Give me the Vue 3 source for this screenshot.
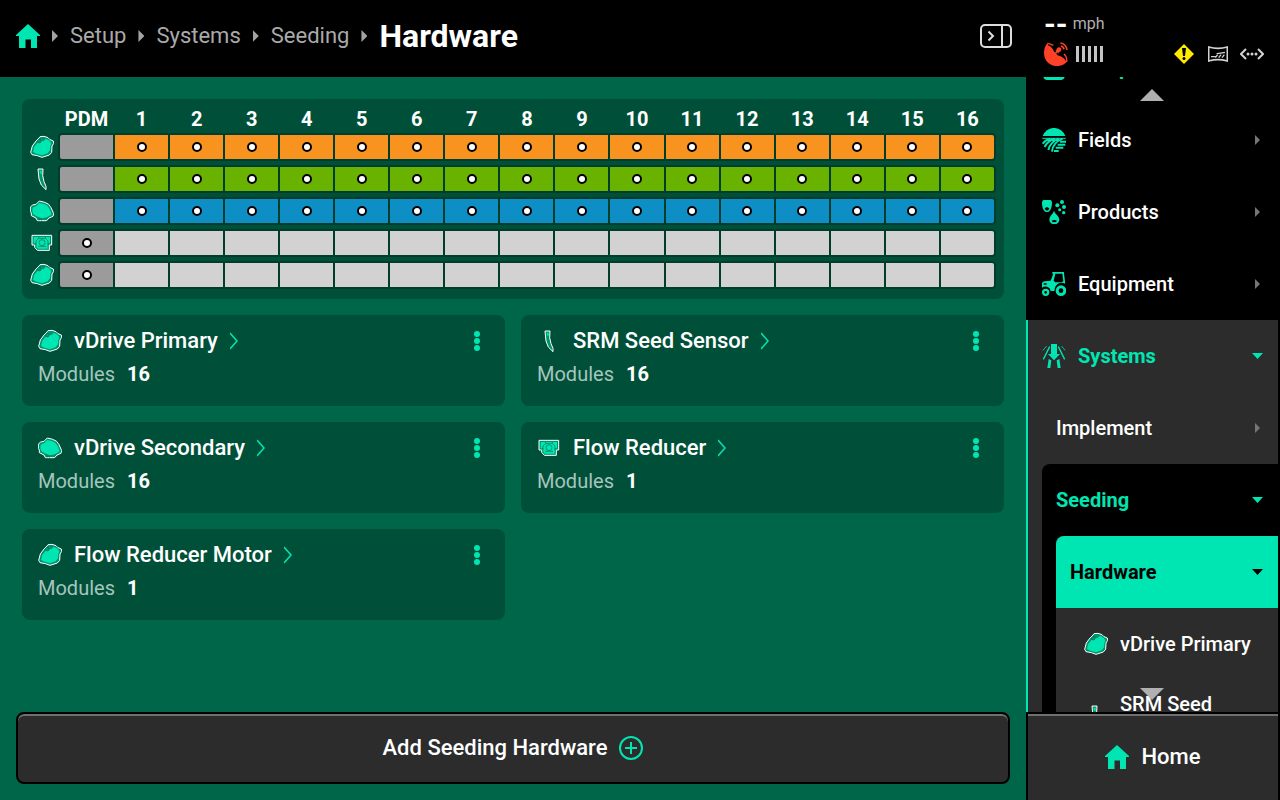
<script setup>
import { ref, onMounted } from 'vue'

const crumbs = ['Setup', 'Systems', 'Seeding']
const columns = Array.from({ length: 16 }, (_, i) => i + 1)

const rows = [
  { name: 'vDrive Primary', icon: 'motor', tone: 'orange', pdm: false, filled: true },
  { name: 'SRM Seed Sensor', icon: 'sensor', tone: 'green', pdm: false, filled: true },
  { name: 'vDrive Secondary', icon: 'motor-alt', tone: 'blue', pdm: false, filled: true },
  { name: 'Flow Reducer', icon: 'reducer', tone: 'empty', pdm: true, filled: false },
  { name: 'Flow Reducer Motor', icon: 'motor', tone: 'empty', pdm: true, filled: false }
]

const cards = [
  { name: 'vDrive Primary', icon: 'motor', modules: 16 },
  { name: 'SRM Seed Sensor', icon: 'sensor', modules: 16 },
  { name: 'vDrive Secondary', icon: 'motor-alt', modules: 16 },
  { name: 'Flow Reducer', icon: 'reducer', modules: 1 },
  { name: 'Flow Reducer Motor', icon: 'motor', modules: 1 }
]

const links = [
  { name: 'Fields', icon: 'fields' },
  { name: 'Products', icon: 'products' },
  { name: 'Equipment', icon: 'tractor' }
]

const nav = ref(null)
onMounted(() => {
  nav.value.scrollTop = 45
})
</script>

<template>
  <svg class="sprite" aria-hidden="true">
    <symbol id="home" viewBox="0 0 24 24">
      <path d="M12 0 24 11v1h-3v12h-6v-8.500H9.500V24H3V12H0v-1z" />
    </symbol>
    <symbol id="motor" viewBox="0 0 72 72">
      <path class="shell" d="M30 5 42 4 54 8 60 14 70 18 71 25 66 33 65 52 58 60 36 67 22 62 6 59 2 52 7 33 18 18 27 9z" />
      <path class="core" d="M32 18 40 19 48 11 57 16 64 24 61 34 60 46 53 55 36 61 18 56 9 50 13 35 22 25z" />
      <path class="line" d="M22 20 30 24 34 17 28 13" />
    </symbol>
    <symbol id="motor-alt" viewBox="0 0 72 72">
      <path class="shell" d="M28 6 44 10 56 16 63 26 71 44 69 52 57 57 50 65 22 65 18 57 4 50 4 42 1 37 1 24 8 18 18 16z" />
      <path class="core" d="M28 12 42 15 52 20 59 30 65 45 62 49 50 55 36 58 20 52 10 46 7 36 8 26 20 20z" />
      <path class="line" d="M27 64V58M34 64V59" />
    </symbol>
    <symbol id="sensor" viewBox="0 0 72 72">
      <path class="shell" d="M24 6H39L38 26 42 44 48 58V68L34 54 27 36z" />
      <path class="core" d="M29 11H35V20H30z" />
    </symbol>
    <symbol id="reducer" viewBox="0 0 72 72">
      <path class="shell" d="M6 13H65V42H58V58H22L14 49V42H6z" />
      <path class="core" d="M11 18H60V37H53V53H24L19 48V37H11z" />
      <path class="line thin" d="M18 40V30L26 22H46L54 30V42M24 46H48M26 22V15M46 22V15" />
      <circle class="line thin" cx="36" cy="35" r="9" />
    </symbol>
    <symbol id="fields" viewBox="0 0 72 72">
      <path d="M2 24A36 36 0 0 1 70 24z" />
      <g fill="none" stroke="currentColor" stroke-width="6">
        <path d="M1 31H71" stroke-width="3" />
        <path d="M25 32C14 34 8 39 2 47M38 32C24 36 13 46 8 57M50 32C34 38 21 52 19 66M62 32C42 40 31 54 30 71" />
        <path d="M54 41H72M47 50H70M41 59H64M36 69H50" />
      </g>
    </symbol>
    <symbol id="products" viewBox="0 0 72 72">
      <path fill-rule="evenodd" d="M5 0H25Q30 1 30 8C30 24 24 36 15 36S0 24 0 8Q0 1 5 0zM8 25Q10 32 15 32T22 25L15 21z" />
      <path fill-rule="evenodd" d="M36 32C38 41 52 48 52 59A15 14 0 0 1 22 59C22 48 34 41 36 32zM29 62Q31 67 37 67T45 62Q37 58 29 62z" />
      <circle cx="60" cy="6" r="6" /><circle cx="46" cy="16" r="6" /><circle cx="66" cy="21" r="6" />
      <circle cx="53" cy="29" r="4.500" /><circle cx="65" cy="38" r="5" />
    </symbol>
    <symbol id="tractor" viewBox="0 0 72 72">
      <path fill-rule="evenodd" d="M31 0H66V5L69 28V35A21 21 0 0 0 38 54L37 57H26A16 16 0 0 0 0 47V33Q2 29 8 28L26 26 34 5H31zM40 5 35 26 40 31H58L64 28 61 5zM5 38H14V34H5z" />
      <path fill-rule="evenodd" d="M57 40A16 16 0 1 0 57 72 16 16 0 1 0 57 40zM57 49A7 7 0 1 1 57 63 7 7 0 1 1 57 49z" />
      <path fill-rule="evenodd" d="M11 50A11 11 0 1 0 11 72 11 11 0 1 0 11 50zM11 57A4 4 0 1 1 11 65 4 4 0 1 1 11 57z" />
    </symbol>
    <symbol id="systems" viewBox="0 0 72 72">
      <path d="M27 0H45V30H54L36 49 18 30H27z" />
      <path d="M20 45 28 49 25 72H16zM52 45 44 49 47 72H56z" />
      <path d="M23 8 4 46M49 8 68 46" fill="none" stroke="currentColor" stroke-width="4" />
      <path d="M13 7 2 20M59 7 70 20" fill="none" stroke="currentColor" stroke-width="3" stroke-dasharray="6 2" />
    </symbol>
    <symbol id="setup" viewBox="0 0 24 24">
      <path d="M4 0H20Q23 0 23 4V20Q22 24 19 24H5Q2 24 1 20V4Q1 0 4 0z" />
    </symbol>
    <symbol id="dish" viewBox="0 0 72 72">
      <path d="M10 4C-4 20-3 48 12 62 28 76 54 76 68 60L70 56 42 34 46 30A7 7 0 1 0 38 22L34 27z" />
      <g fill="none" stroke="currentColor" stroke-width="5">
        <path d="M51 12A12 12 0 0 1 60 22M49 3A22 22 0 0 1 69 24" />
      </g>
      <path d="M12 7Q26 10 32 27L43 38Q60 42 69 57" fill="none" stroke="#000" stroke-width="5" />
      <path d="M10 4Q20 5 28 10M60 36Q70 44 68 60" fill="none" stroke="currentColor" stroke-width="4" />
      <path d="M30 38 45 24" stroke="currentColor" stroke-width="5" />
    </symbol>
    <symbol id="implement-map" viewBox="0 0 60 48">
      <g fill="none" stroke="currentColor" stroke-width="4">
        <path d="M2 3Q30 11 58 3V45Q30 37 2 45z" stroke-width="5" />
        <path d="M26 23Q38 22 51 19" />
        <path d="M9 32H22M22 35 29 26M32 35 39 26M42 35 49 26" />
      </g>
    </symbol>
  </svg>

  <div class="app">
    <main class="main">
      <header class="header">
        <nav class="crumbs" aria-label="Breadcrumb">
          <a href="#" class="crumb-home" aria-label="Home"><svg class="icon"><use href="#home" /></svg></a>
          <template v-for="crumb in crumbs" :key="crumb">
            <i class="caret right light"></i>
            <a href="#" class="crumb">{{ crumb }}</a>
          </template>
          <i class="caret right light"></i>
          <h1>Hardware</h1>
        </nav>
        <button class="plain" type="button" aria-label="Collapse side panel">
          <svg class="panel-icon" viewBox="0 0 32 24" fill="none" stroke="currentColor" stroke-width="2">
            <rect x="1" y="1" width="30" height="22" rx="4" />
            <path d="M22 1V23" />
            <path d="M8.500 7.500 13 12 8.500 16.500" stroke-width="2" />
          </svg>
        </button>
      </header>

      <div class="content">
        <section class="matrix">
          <table>
            <colgroup><col class="icon-col" /><col span="17" /></colgroup>
            <thead>
              <tr>
                <td></td>
                <th scope="col">PDM</th>
                <th v-for="n in columns" :key="n" scope="col">{{ n }}</th>
              </tr>
            </thead>
            <tbody>
              <tr v-for="row in rows" :key="row.name" :class="row.tone">
                <th scope="row" :aria-label="row.name">
                  <svg class="icon"><use :href="'#' + row.icon" /></svg>
                </th>
                <td class="cell pdm"><i v-if="row.pdm" class="node"></i></td>
                <td v-for="n in columns" :key="n" class="cell"><i v-if="row.filled" class="node"></i></td>
              </tr>
            </tbody>
          </table>
        </section>

        <section class="cards">
          <article v-for="card in cards" :key="card.name" class="card">
            <div class="card-head">
              <a href="#" class="card-link">
                <svg class="icon"><use :href="'#' + card.icon" /></svg>
                <span>{{ card.name }}</span>
                <svg class="chevron" viewBox="0 0 8 18"><path d="M0 1 7 9 0 17" /></svg>
              </a>
              <button class="plain more" type="button" :aria-label="card.name + ' options'"><i></i><i></i><i></i></button>
            </div>
            <p>Modules <b>{{ card.modules }}</b></p>
          </article>
        </section>
      </div>

      <footer class="footer">
        <button class="add" type="button">
          Add Seeding Hardware
          <svg class="icon outline" viewBox="0 0 24 24">
            <circle cx="12" cy="12" r="11" /><path d="M12 6V18M6 12H18" />
          </svg>
        </button>
      </footer>
    </main>

    <aside class="side">
      <div class="status">
        <div class="speed"><b>--</b><span>mph</span></div>
        <div class="signals">
          <svg class="icon dish"><use href="#dish" /></svg>
          <span class="bars"><i v-for="n in 5" :key="n"></i></span>
          <svg class="warn" viewBox="0 0 20 20">
            <path d="M10 0 20 10 10 20 0 10z" fill="#ffeb00" />
            <path d="M8 4H12L11 12H9z" /><circle cx="10" cy="14.500" r="1.500" />
          </svg>
          <svg class="map"><use href="#implement-map" /></svg>
          <svg class="link" viewBox="0 0 24 12">
            <path d="M6 1 1 6 6 11M18 1 23 6 18 11" fill="none" stroke="currentColor" stroke-width="2" />
            <circle cx="8" cy="6" r="1.500" /><circle cx="12" cy="6" r="1.500" /><circle cx="16" cy="6" r="1.500" />
          </svg>
        </div>
      </div>

      <div class="nav-wrap">
        <nav ref="nav" class="nav" aria-label="Main">
          <a href="#" class="item current"><svg class="icon"><use href="#setup" /></svg><span>Setup</span></a>
          <a v-for="link in links" :key="link.name" href="#" class="item">
            <svg class="icon"><use :href="'#' + link.icon" /></svg>
            <span>{{ link.name }}</span>
            <i class="caret right"></i>
          </a>
          <div class="level-1">
            <a href="#" class="item current"><svg class="icon"><use href="#systems" /></svg><span>Systems</span><i class="caret down"></i></a>
            <div class="children">
              <a href="#" class="item"><span>Implement</span><i class="caret right"></i></a>
              <div class="level-2">
                <a href="#" class="item current"><span>Seeding</span><i class="caret down"></i></a>
                <div class="level-3">
                  <a href="#" class="item selected"><span>Hardware</span><i class="caret down"></i></a>
                  <a href="#" class="item leaf"><svg class="icon"><use href="#motor" /></svg><span>vDrive Primary</span></a>
                  <a href="#" class="item leaf"><svg class="icon"><use href="#sensor" /></svg><span>SRM Seed Sensor</span></a>
                </div>
              </div>
            </div>
          </div>
        </nav>
        <button class="plain scroll up" type="button" aria-label="Scroll up"></button>
        <button class="plain scroll down" type="button" aria-label="Scroll down"></button>
      </div>

      <a href="#" class="home"><svg class="icon"><use href="#home" /></svg>Home</a>
    </aside>
  </div>
</template>

<style>
body {
  background: #000;
}
</style>

<style scoped>
.sprite {
  position: absolute;
  width: 0;
  height: 0;
}
.app {
  --teal: #00e6b2;
  --gray: #2c2c2c;
  display: grid;
  grid-template-columns: minmax(0, 1fr) 254px;
  height: 100vh;
  font-family: Roboto, sans-serif;
  font-size: 20px;
  font-weight: 500;
  line-height: 24px;
  color: #fff;
  background: #000;
}
a {
  color: inherit;
  text-decoration: none;
}
.plain {
  padding: 0;
  border: 0;
  background: none;
  color: inherit;
}
.icon {
  flex: none;
  width: 24px;
  height: 24px;
  color: var(--teal);
  fill: currentColor;
}
.icon.outline {
  fill: none;
  stroke: currentColor;
  stroke-width: 2;
}
.shell {
  fill: #00946e;
  stroke: #fff;
  stroke-width: 3;
  stroke-linejoin: round;
}
.core {
  fill: #00e6b2;
}
.line {
  fill: none;
  stroke: #006b50;
  stroke-width: 3;
}
.line.thin {
  stroke: #00946e;
}
.caret {
  flex: none;
  width: 5px;
  height: 10px;
  background: #767676;
}
.caret.right {
  clip-path: polygon(0 0, 100% 50%, 0 100%);
}
.caret.light {
  width: 6px;
  height: 12px;
  background: #a3a3a3;
}
.caret.down {
  width: 11px;
  height: 6px;
  background: currentColor;
  clip-path: polygon(0 0, 100% 0, 50% 100%);
}

.main {
  display: flex;
  flex-direction: column;
  min-height: 0;
  background: #006649;
}
.header {
  display: flex;
  align-items: center;
  justify-content: space-between;
  height: 72px;
  padding: 0 14px 5px 16px;
  background: #000;
}
.crumbs {
  display: flex;
  align-items: center;
  gap: 12px;
}
.crumb-home {
  display: flex;
}
.crumb {
  font-size: 22px;
  font-weight: 400;
  color: #aaa;
}
h1 {
  margin: 0;
  font-size: 32px;
  line-height: 38px;
  font-weight: 700;
}
.panel-icon {
  display: block;
  width: 32px;
  height: 24px;
  color: #ddd;
}
.content {
  flex: 1;
  display: flex;
  flex-direction: column;
  gap: 16px;
  padding: 22px;
  min-height: 0;
}
.matrix {
  padding: 0 8px 4px 2px;
  border-radius: 8px;
  background: #005039;
}
table {
  width: 100%;
  table-layout: fixed;
  border-collapse: separate;
  border-spacing: 2px 8px;
}
.icon-col {
  width: 32px;
}
th,
td {
  padding: 0;
  text-align: center;
  vertical-align: middle;
}
thead th {
  height: 20px;
  padding-top: 4px;
  box-sizing: border-box;
  line-height: 16px;
  font-weight: 700;
}
tbody th {
  line-height: 0;
}
.cell {
  height: 24px;
  line-height: 0;
  background: #d2d2d2;
  box-shadow: 0 0 0 2px #003d2b;
}
.pdm {
  border-radius: 2px 0 0 2px;
}
.cell:last-child {
  border-radius: 0 2px 2px 0;
}
.orange .cell {
  background: #f7931e;
}
.green .cell {
  background: #69b300;
}
.blue .cell {
  background: #0d8fc6;
}
tr .cell.pdm {
  background: #9b9b9b;
}
.node {
  display: block;
  box-sizing: border-box;
  width: 10px;
  height: 10px;
  margin: 0 auto;
  border: 2px solid #000;
  border-radius: 50%;
  background: #fff;
}

.cards {
  display: grid;
  grid-template-columns: 1fr 1fr;
  gap: 16px;
}
.card {
  padding: 14px 22px 20px 16px;
  border-radius: 8px;
  background: #005039;
}
.card-head {
  display: flex;
  align-items: center;
  justify-content: space-between;
}
.card-link {
  display: flex;
  align-items: center;
  gap: 12px;
  font-size: 22px;
}
.chevron {
  width: 8px;
  height: 18px;
  fill: none;
  stroke: var(--teal);
  stroke-width: 1.500;
}
.more {
  display: grid;
  gap: 1px;
  padding: 0 3px;
}
.more i {
  width: 6px;
  height: 6px;
  border-radius: 50%;
  background: var(--teal);
}
.card p {
  display: flex;
  gap: 12px;
  margin: 9px 0 0;
  font-weight: 400;
  color: #a6c5bd;
}
.card b {
  font-weight: 700;
  color: #fff;
}

.footer {
  padding: 0 16px 16px;
}
.add {
  display: flex;
  align-items: center;
  justify-content: center;
  gap: 12px;
  width: 100%;
  height: 72px;
  border: 2px solid #000;
  border-radius: 8px;
  background: var(--gray);
  box-shadow: inset 0 2px #707070;
  font: 500 22px/24px Roboto, sans-serif;
  color: #fff;
}

.side {
  display: flex;
  flex-direction: column;
  min-height: 0;
  padding-right: 2px;
}
.status {
  height: 77px;
  padding: 0 14px 0 18px;
  box-sizing: border-box;
}
.speed {
  display: flex;
  gap: 5px;
  height: 30px;
  padding-top: 12px;
  font-size: 16px;
  font-weight: 400;
  color: #b0b0b0;
}
.speed b {
  font-size: 30px;
  color: #fff;
}
.signals {
  display: flex;
  align-items: center;
  height: 24px;
  color: #d2d2d2;
}
.icon.dish {
  color: #ff4128;
}
.bars {
  display: flex;
  flex: 1;
  gap: 3px;
  padding-left: 8px;
}
.bars i {
  width: 3px;
  height: 16px;
  background: #c4c4c4;
}
.warn {
  width: 20px;
  height: 20px;
}
.map {
  width: 20px;
  height: 16px;
  margin: 0 12px 0 14px;
}
.link {
  width: 24px;
  height: 12px;
  fill: currentColor;
}
.nav-wrap {
  position: relative;
  flex: 1;
  min-height: 0;
}
.nav {
  height: 100%;
  overflow: hidden;
}
.item {
  display: flex;
  align-items: center;
  gap: 12px;
  height: 72px;
  padding: 0 16px;
}
.item span {
  flex: 1;
}
.item .right {
  margin-right: 2px;
}
.item .down {
  margin-right: -1px;
}
.current {
  font-weight: 700;
  color: var(--teal);
}
.level-1 {
  box-shadow: inset 2px 0 var(--teal);
  background: linear-gradient(var(--gray), var(--gray)) 2px 0 no-repeat;
}
.children {
  padding-left: 16px;
}
.children .item {
  padding-left: 14px;
}
.level-2 {
  border-radius: 8px 0 0 0;
  background: #000;
}
.level-3 {
  margin-left: 14px;
  border-radius: 8px 0 0 0;
  background: var(--gray);
}
.selected {
  border-radius: 8px 0 0 0;
  background: var(--teal);
  font-weight: 700;
  color: #000;
}
.children .leaf {
  padding-left: 28px;
}
.scroll {
  position: absolute;
  left: 50%;
  width: 24px;
  height: 12px;
  margin-left: -12px;
  background: #b0b0b0;
}
.up {
  top: 12px;
  clip-path: polygon(50% 0, 100% 100%, 0 100%);
}
.scroll.down {
  bottom: 12px;
  clip-path: polygon(0 0, 100% 0, 50% 100%);
}
.home {
  display: flex;
  align-items: center;
  justify-content: center;
  gap: 12px;
  height: 86px;
  margin-left: 2px;
  border-top: 2px solid #000;
  background: var(--gray);
  box-shadow: inset 0 2px #707070;
  font-size: 22px;
}
</style>
